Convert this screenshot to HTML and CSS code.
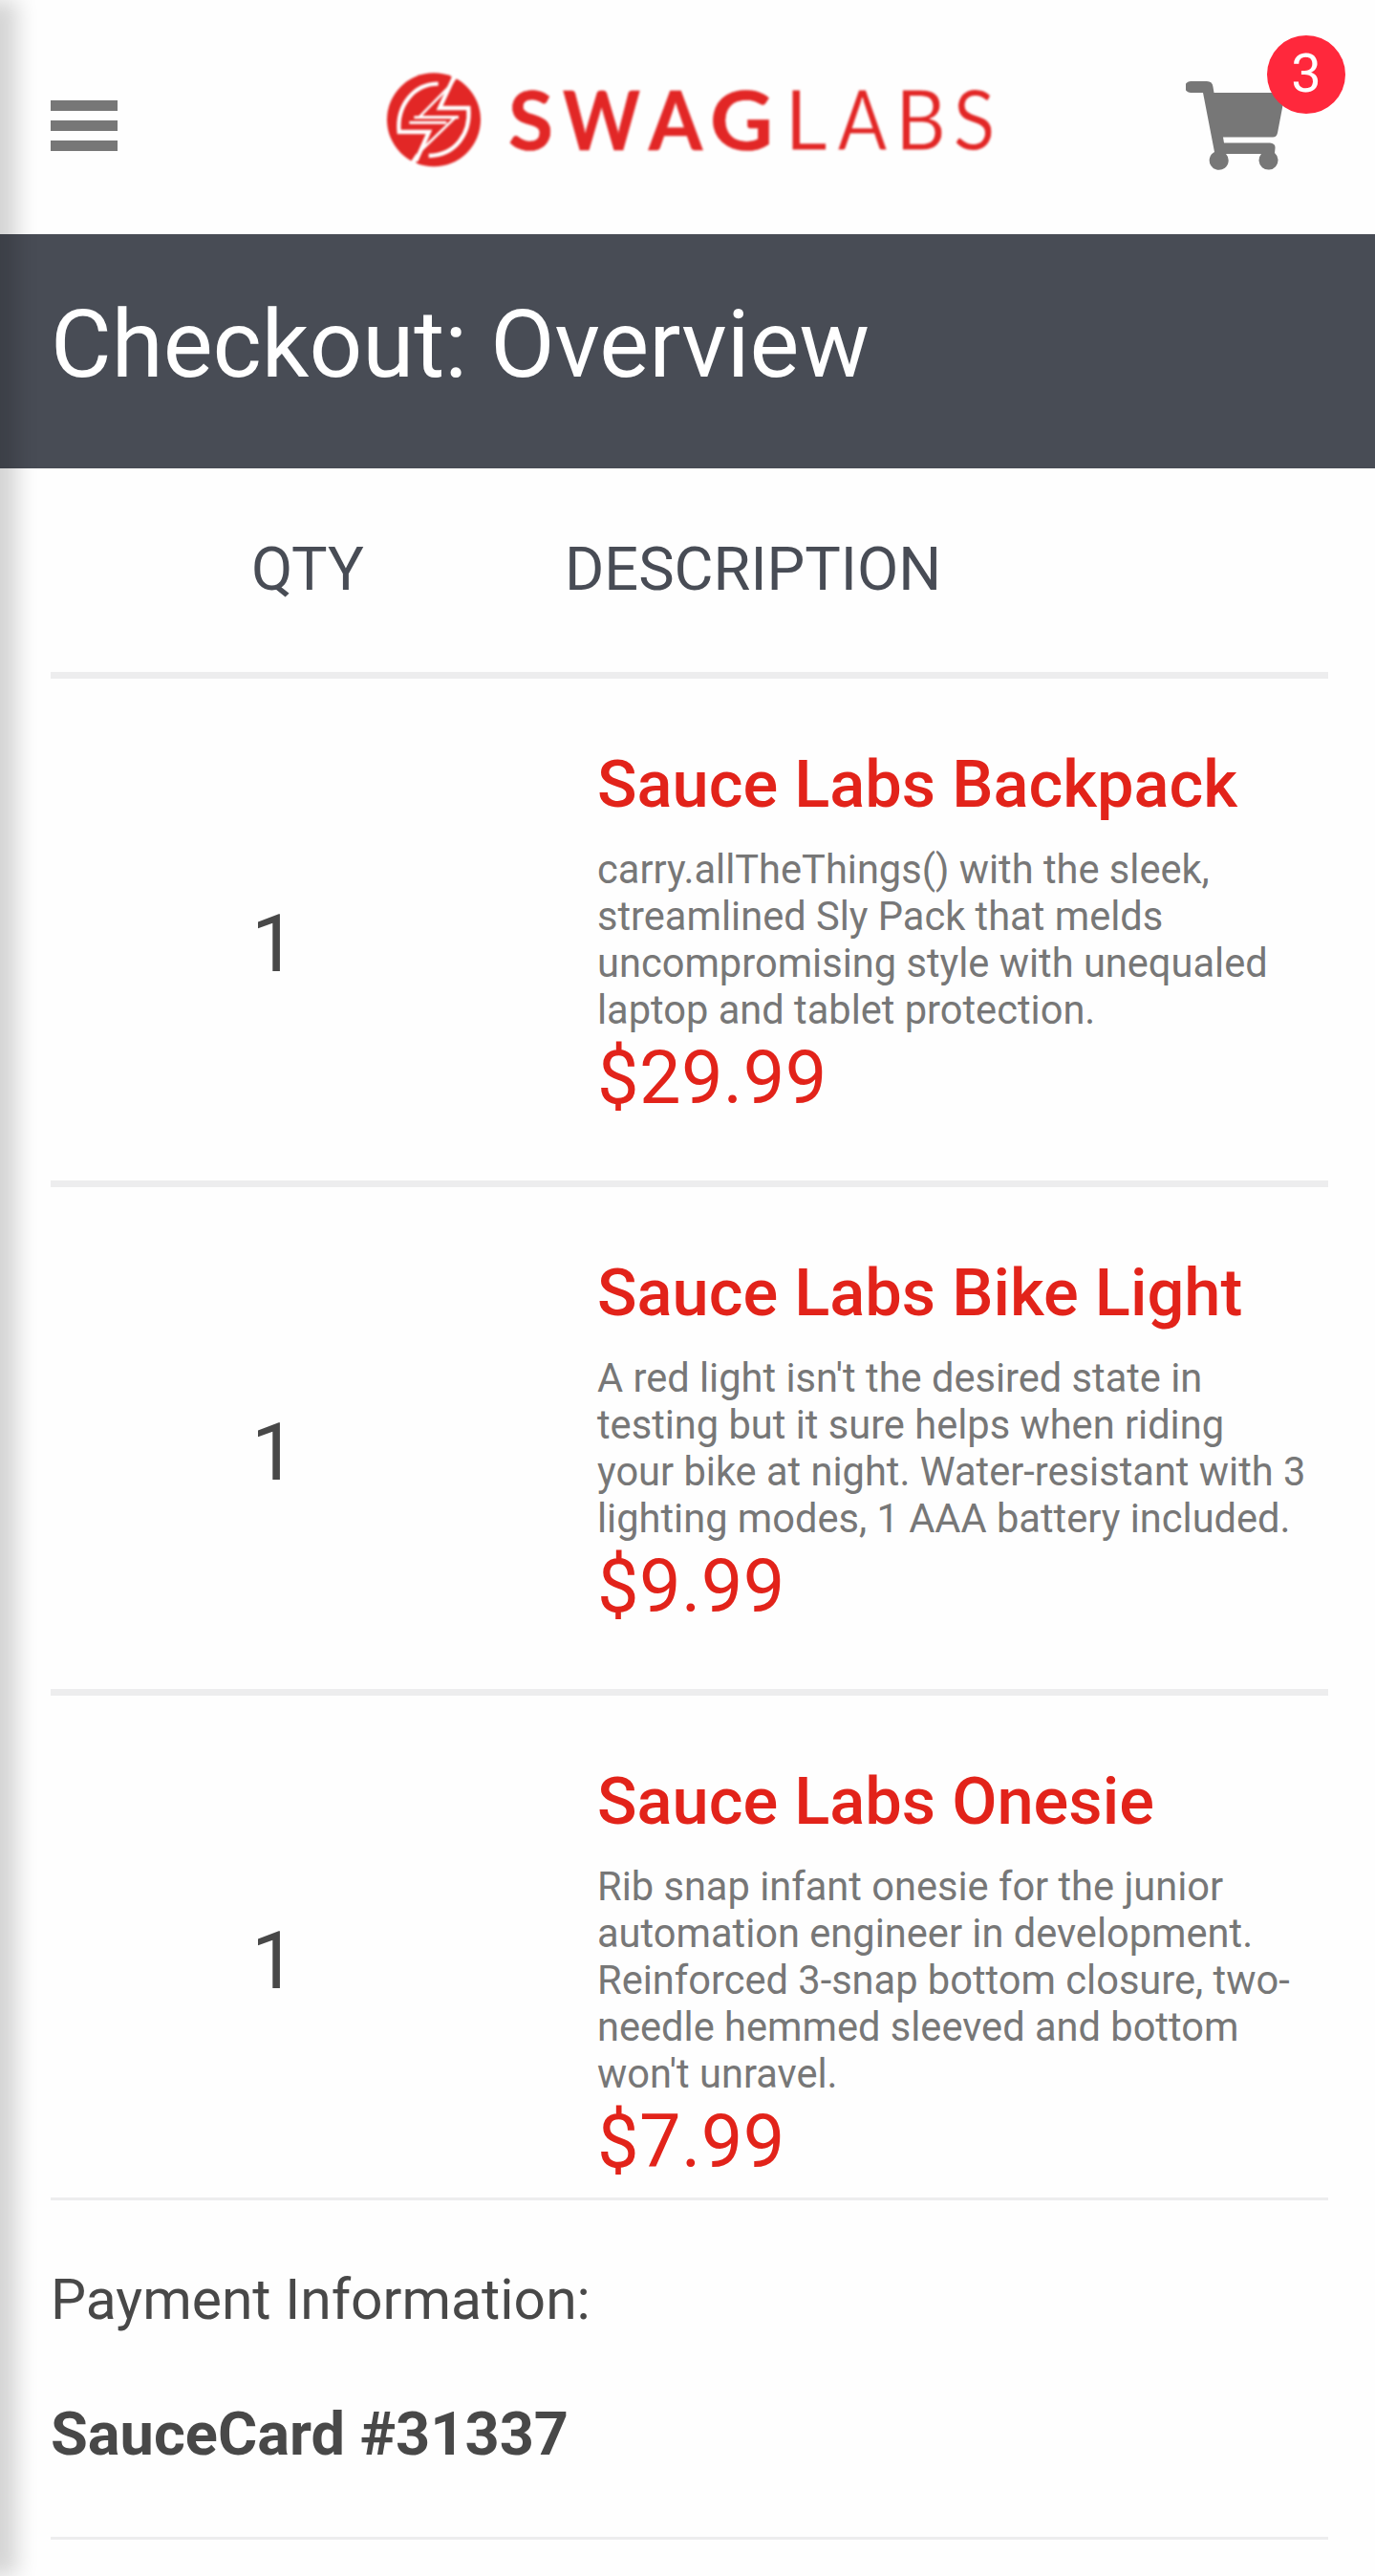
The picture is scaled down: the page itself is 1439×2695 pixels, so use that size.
FILE: index.html
```html
<!DOCTYPE html>
<html lang="en">
<head>
<meta charset="utf-8">
<title>Swag Labs</title>
<link rel="stylesheet" href="styles.css">
</head>
<body>
<div class="page">
  <header class="header">
    <button class="menu" aria-label="Open Menu"><span></span><span></span><span></span></button>
    <svg class="logo" viewBox="0 0 650 110" role="img" aria-label="Swag Labs">
      <g transform="translate(-20 -20) scale(.33333)">
        <circle cx="222" cy="226" r="147" fill="#e22726"/>
        <g fill="none" stroke="#fff">
          <path d="M236 113C160 113 105 180 113 264H207L166 355M206 339C290 337 338 270 331 189H240L284 95" stroke-width="13"/>
          <path d="M268 124L176 218H290L178 326" stroke-width="8"/>
          <path d="M160 218H300M145 235H262" stroke-width="9"/>
          <path d="M280 70L305 80L275 122ZM166 384L140 372L168 330Z" fill="#fff" stroke="none"/>
        </g>
      </g>
      <g fill="#e22726" class="wordmark">
        <g class="bold">
          <text x="132" y="87" textLength="47" lengthAdjust="spacingAndGlyphs">S</text>
          <text x="189" y="87" textLength="81" lengthAdjust="spacingAndGlyphs">W</text>
          <text x="279" y="87" textLength="56" lengthAdjust="spacingAndGlyphs">A</text>
          <text x="343" y="87" textLength="66" lengthAdjust="spacingAndGlyphs">G</text>
        </g>
        <g class="light">
          <text x="421" y="87" textLength="45" lengthAdjust="spacingAndGlyphs">L</text>
          <text x="476.500" y="87" textLength="52" lengthAdjust="spacingAndGlyphs">A</text>
          <text x="537" y="87" textLength="53" lengthAdjust="spacingAndGlyphs">B</text>
          <text x="597.500" y="87" textLength="44" lengthAdjust="spacingAndGlyphs">S</text>
        </g>
      </g>
    </svg>
    <a class="cart">
      <svg viewBox="0 0 104 96" aria-hidden="true"><path fill="#777" d="M5 1H22Q28 1 28.500 7L29.500 13H104L96 55Q95 59.500 91 59.500H39L40 65.500H88Q94 66 93.500 71L93 76A10 10 0 1 1 79 77H42A10 10 0 1 1 30 75L18 13H5A5 5 0 0 1 5 1Z"/></svg>
      <span class="badge">3</span>
    </a>
  </header>
  <div class="title-bar"><h1>Checkout: Overview</h1></div>
  <main>
    <div class="row labels"><span class="qty-label">QTY</span><span class="desc-label">DESCRIPTION</span></div>
    <section class="row item">
      <div class="qty">1</div>
      <div class="info"><h2>Sauce Labs Backpack</h2>
        <p>carry.allTheThings() with the sleek, streamlined Sly Pack that melds uncompromising style with unequaled laptop and tablet protection.</p>
        <div class="price">$29.99</div></div>
    </section>
    <section class="row item">
      <div class="qty">1</div>
      <div class="info"><h2>Sauce Labs Bike Light</h2>
        <p>A red light isn't the desired state in testing but it sure helps when riding your bike at night. Water-resistant with 3 lighting modes, 1 AAA battery included.</p>
        <div class="price">$9.99</div></div>
    </section>
    <section class="row item">
      <div class="qty">1</div>
      <div class="info"><h2>Sauce Labs Onesie</h2>
        <p>Rib snap infant onesie for the junior automation engineer in development. Reinforced 3-snap bottom closure, two-needle hemmed sleeved and bottom won't unravel.</p>
        <div class="price">$7.99</div></div>
    </section>
    <section class="payment">
      <div class="payment-label">Payment Information:</div>
      <div class="payment-value">SauceCard #31337</div>
    </section>
  </main>
  <div class="drawer-shadow"></div>
</div>
</body>
</html>
```
FILE: styles.css
```css
* { box-sizing: border-box; margin: 0; }
body { background: #fff; font-family: Roboto, sans-serif; color: #484c55; }
.page { position: relative; width: 1439px; height: 2695px; overflow: hidden; background: #fefefe; }
.header { height: 245px; display: flex; justify-content: space-between; align-items: flex-start; padding: 0 31px 0 53px; }
.menu { width: 70px; height: 53px; margin-top: 105px; padding: 0; border: 0; background: none; display: flex; flex-direction: column; justify-content: space-between; }
.menu span { width: 70px; height: 11px; background: #777; }
.logo { width: 650px; height: 110px; margin: 70px 0 0 86px; filter: blur(1px); }
.wordmark { font-family: Lato, sans-serif; font-size: 87px; }
.bold { font-weight: 700; stroke: #e22726; stroke-width: .6px; }
.light { font-weight: 400; stroke: #fefefe; stroke-width: .9px; }
.cart { position: relative; width: 167px; height: 150px; margin-top: 37px; padding-top: 47px; }
.cart svg { display: block; width: 104px; height: 96px; }
.badge { position: absolute; left: 85px; top: 0; width: 82px; height: 82px; border-radius: 50%; background: #ff283c; color: #fff; font-size: 56px; line-height: 80px; text-align: center; }
.title-bar { height: 245px; padding: 0 53px; background: #484c55; color: #fff; }
h1 { font-size: 97.9px; font-weight: 400; line-height: 115px; padding-top: 58px; }
main { padding: 0 49px 0 53px; }
.row { display: flex; border-bottom: 7px solid #ededee; }
.labels { height: 220px; padding-top: 69px; font-size: 63px; line-height: 73px; }
.qty-label { width: 328px; padding-left: 210px; }
.desc-label { padding-left: 210px; }
.item { height: 532px; padding-top: 70px; }
.item:nth-of-type(3) { height: 525px; border-bottom: 0; }
.qty { width: 572px; flex: none; padding: 158px 0 0 210px; font-size: 84px; line-height: 99px; color: #484848; }
.info { width: 743px; }
h2 { font-size: 68.6px; font-weight: 500; line-height: 81px; color: #e2231a; }
p { margin-top: 24px; font-size: 41.6px; line-height: 49px; color: #777; }
.price { font-size: 77.5px; letter-spacing: .4px; line-height: 93px; color: #e2231a; }
.payment { height: 358px; border: solid #ededee; border-width: 3px 0; padding-top: 69px; color: #484848; }
.payment-label { font-size: 58.8px; line-height: 69px; }
.payment-value { margin-top: 70px; font-size: 63.1px; font-weight: 700; line-height: 73px; }
.drawer-shadow { position: absolute; left: -200px; top: 0; width: 100px; height: 2695px; box-shadow: 118px 0 21px rgba(0,0,0,.165); }
```
